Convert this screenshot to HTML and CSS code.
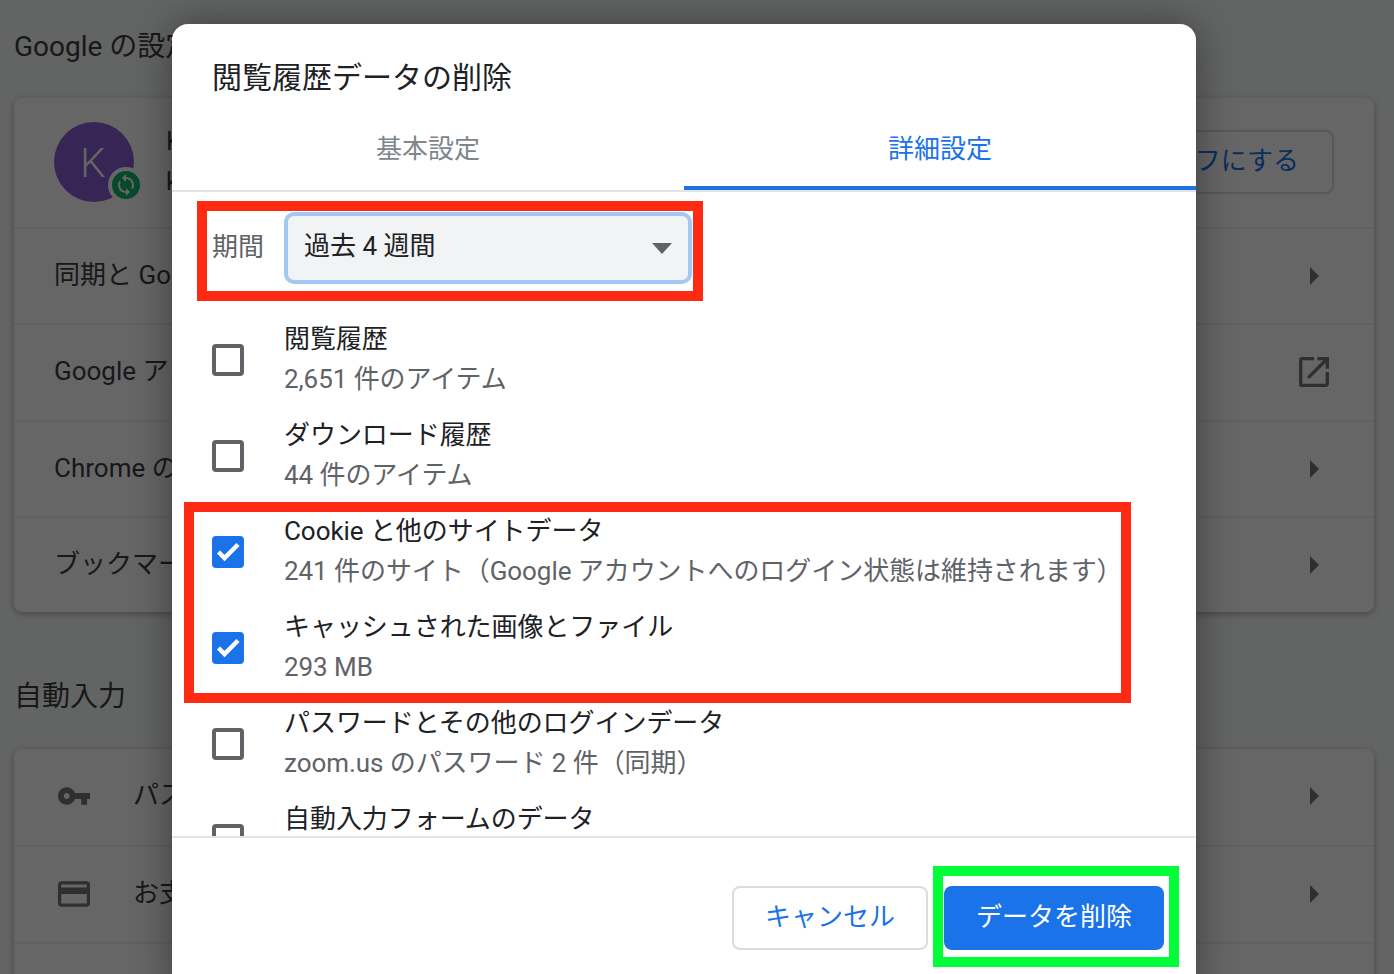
FILE: index.html
```html
<!DOCTYPE html>
<html lang="ja">
<head>
<meta charset="UTF-8">
<meta name="viewport" content="width=device-width, initial-scale=1.0">
<title>閲覧履歴データの削除</title>
<link rel="stylesheet" href="styles.css">
</head>
<body>
<main class="settings">
    <h2 class="section-title first">Google の設定</h2>
    <section class="card">
        <div class="profile">
            <div class="avatar">K
                <span class="sync-badge">
                    <svg viewBox="0 0 24 24" width="24" height="24"><path d="M12 4V1L8 5l4 4V6c3.31 0 6 2.69 6 6 0 1.01-.25 1.97-.7 2.8l1.46 1.46C19.54 15.03 20 13.57 20 12c0-4.42-3.58-8-8-8zm0 14c-3.31 0-6-2.69-6-6 0-1.01.25-1.97.7-2.8L5.24 7.74C4.46 8.97 4 10.43 4 12c0 4.42 3.58 8 8 8v3l4-4-4-4v3z"/></svg>
                </span>
            </div>
            <div class="profile-name">
                <div>K</div>
                <div>k</div>
            </div>
            <button class="sync-button">オフにする</button>
        </div>
        <div class="row">同期と Google サービス<span class="row-end"><i class="arrow"></i></span></div>
        <div class="row">Google アカウントの管理
            <span class="row-end">
                <svg viewBox="3 3 18 18" width="30" height="30"><path d="M19 19H5V5h7V3H5a2 2 0 0 0-2 2v14a2 2 0 0 0 2 2h14c1.1 0 2-.9 2-2v-7h-2v7zM14 3v2h3.59l-9.83 9.83 1.41 1.41L19 6.41V10h2V3h-7z"/></svg>
            </span>
        </div>
        <div class="row">Chrome の名前と画像<span class="row-end"><i class="arrow"></i></span></div>
        <div class="row">ブックマークと設定をインポート<span class="row-end"><i class="arrow"></i></span></div>
    </section>

    <h2 class="section-title second">自動入力</h2>
    <section class="card">
        <div class="row no-line">
            <svg class="row-icon" viewBox="1 1 22 22" width="32" height="32"><path d="M12.65 10C11.83 7.67 9.61 6 7 6c-3.31 0-6 2.69-6 6s2.69 6 6 6c2.61 0 4.83-1.67 5.65-4H17v4h4v-4h2v-4H12.65zM7 14c-1.1 0-2-.9-2-2s.9-2 2-2 2 .9 2 2-.9 2-2 2z"/></svg>
            パスワード<span class="row-end"><i class="arrow"></i></span>
        </div>
        <div class="row">
            <svg class="row-icon" viewBox="2 2 20 20" width="32" height="32"><path d="M20 4H4c-1.11 0-1.99.89-1.99 2L2 18c0 1.11.89 2 2 2h16c1.11 0 2-.89 2-2V6c0-1.11-.89-2-2-2zm0 14H4v-6h16v6zm0-10H4V6h16v2z"/></svg>
            お支払い方法<span class="row-end"><i class="arrow"></i></span>
        </div>
        <div class="row"></div>
    </section>
</main>

<div class="overlay">
    <div class="dialog">
        <h1 class="dialog-title">閲覧履歴データの削除</h1>
        <div class="tabs">
            <div class="tab">基本設定</div>
            <div class="tab active">詳細設定</div>
        </div>
        <div class="dialog-body">
            <div class="range">
                <span class="range-label">期間</span>
                <div class="range-select">過去 4 週間<i class="caret"></i></div>
            </div>
            <div class="check-row">
                <span class="checkbox"></span>
                <div class="check-text">
                    <div>閲覧履歴</div>
                    <div class="sub">2,651 件のアイテム</div>
                </div>
            </div>
            <div class="check-row">
                <span class="checkbox"></span>
                <div class="check-text">
                    <div>ダウンロード履歴</div>
                    <div class="sub">44 件のアイテム</div>
                </div>
            </div>
            <div class="check-row">
                <span class="checkbox checked">
                    <svg viewBox="0 0 32 32" width="32" height="32"><path d="M6.5 16l6 6L26 8.5" fill="none" stroke="#fff" stroke-width="4.5"/></svg>
                </span>
                <div class="check-text">
                    <div>Cookie と他のサイトデータ</div>
                    <div class="sub">241 件のサイト（Google アカウントへのログイン状態は維持されます）</div>
                </div>
            </div>
            <div class="check-row">
                <span class="checkbox checked">
                    <svg viewBox="0 0 32 32" width="32" height="32"><path d="M6.5 16l6 6L26 8.5" fill="none" stroke="#fff" stroke-width="4.5"/></svg>
                </span>
                <div class="check-text">
                    <div>キャッシュされた画像とファイル</div>
                    <div class="sub">293 MB</div>
                </div>
            </div>
            <div class="check-row">
                <span class="checkbox"></span>
                <div class="check-text">
                    <div>パスワードとその他のログインデータ</div>
                    <div class="sub">zoom.us のパスワード 2 件（同期）</div>
                </div>
            </div>
            <div class="check-row">
                <span class="checkbox"></span>
                <div class="check-text">
                    <div>自動入力フォームのデータ</div>
                </div>
            </div>
        </div>
        <div class="dialog-footer">
            <button class="btn cancel">キャンセル</button>
            <button class="btn delete">データを削除</button>
        </div>
    </div>

    <div class="mark mark-range"></div>
    <div class="mark mark-items"></div>
    <div class="mark mark-delete"></div>
</div>
</body>
</html>
```

FILE: styles.css
```css
html, body {
    height: 100%;
}
body {
    margin: 0;
    height: 974px;
    overflow: hidden;
    position: relative;
    background: #f8f9fa;
    color: #3c3d3f;
    font-family: Roboto, "Noto Sans CJK JP", sans-serif;
    font-size: 26px;
    line-height: 40px;
}

/* settings page behind the dialog */
.settings {
    padding: 27px 20px 0 14px;
}
.section-title {
    margin: 0;
    font-size: 28px;
    font-weight: 400;
    line-height: 40px;
}
.section-title.first {
    margin-bottom: 31px;
}
.section-title.second {
    margin: 65px 0 32px;
}
.card {
    background: #fff;
    border-radius: 8px;
    box-shadow: 0 2px 6px rgba(60, 64, 67, 0.4);
}
.profile {
    display: flex;
    align-items: center;
    height: 129px;
    padding: 0 40px 2px;
    box-sizing: border-box;
}
.avatar {
    position: relative;
    flex: 0 0 80px;
    height: 80px;
    border-radius: 50%;
    background: #895fd4;
    color: #fff;
    font-size: 40px;
    font-weight: 300;
    line-height: 84px;
    text-align: center;
    text-indent: -2px;
}
.sync-badge {
    position: absolute;
    right: -10px;
    bottom: -1px;
    width: 36px;
    height: 36px;
    box-sizing: border-box;
    border: 4px solid #fff;
    border-radius: 50%;
    background: #10b96c;
    display: flex;
    align-items: center;
    justify-content: center;
    text-indent: 0;
}
.sync-badge svg {
    fill: #fff;
}
.profile-name {
    flex: 1;
    margin: -2px 0 0 32px;
}
.sync-button {
    width: 200px;
    height: 64px;
    padding-bottom: 2px;
    background: #fff;
    border: 2px solid #dadce0;
    border-radius: 8px;
    color: #1a73e8;
    font: inherit;
}
.row {
    display: flex;
    align-items: center;
    height: 96.25px;
    padding: 0 45px 2px 40px;
    box-sizing: border-box;
    border-top: 2px solid #f0f0f0;
}
.row.no-line {
    border-top: none;
    padding-bottom: 4px;
}
.row-icon {
    margin: 2px 43px 0 4px;
    fill: #747577;
}
.row-end {
    margin: 2px 0 0 auto;
    width: 30px;
    display: flex;
    justify-content: center;
    fill: #747577;
}
.arrow {
    width: 0;
    height: 0;
    border-left: 9px solid #747577;
    border-top: 9px solid transparent;
    border-bottom: 9px solid transparent;
}

/* dialog */
.overlay {
    position: absolute;
    top: 0;
    left: 0;
    width: 100%;
    height: 100%;
    background: rgba(0, 0, 0, 0.6);
}
.dialog {
    position: absolute;
    top: 24px;
    left: 172px;
    width: 1024px;
    display: flex;
    flex-direction: column;
    background: #fff;
    border-radius: 16px;
    box-shadow: 0 0 40px rgba(0, 0, 0, 0.4);
    color: #202124;
}
.dialog-title {
    margin: 0;
    padding: 34px 40px 0;
    font-size: 30px;
    font-weight: 400;
    line-height: 39px;
}
.tabs {
    display: flex;
    border-bottom: 2px solid #e3e4e6;
}
.tab {
    flex: 1;
    padding: 32px 0 17px;
    border-bottom: 4px solid transparent;
    color: #80868b;
    text-align: center;
}
.tab.active {
    border-bottom-color: #1a73e8;
    color: #1a73e8;
}
.dialog-body {
    height: 644px;
    box-sizing: border-box;
    padding-top: 20px;
    overflow: hidden;
}
.range {
    display: flex;
    align-items: center;
    padding-left: 40px;
    margin-bottom: 27px;
}
.range-label {
    width: 72px;
    color: #5f6368;
    margin-top: -3px;
}
.range-select {
    position: relative;
    width: 408px;
    height: 72px;
    box-sizing: border-box;
    padding-left: 16px;
    background: #f1f3f4;
    border: 4px solid #a1c9f4;
    border-radius: 10px;
    line-height: 61px;
}
.caret {
    position: absolute;
    top: 27px;
    right: 16px;
    width: 0;
    height: 0;
    border-top: 11px solid #5f6368;
    border-left: 10px solid transparent;
    border-right: 10px solid transparent;
}
.check-row {
    display: flex;
    align-items: center;
    gap: 40px;
    height: 96px;
    padding-left: 40px;
}
.checkbox {
    flex: 0 0 32px;
    height: 32px;
    box-sizing: border-box;
    margin-top: 2px;
    border: 4px solid #5f6368;
    border-radius: 4px;
}
.checkbox.checked {
    border: none;
    background: #1a73e8;
}
.checkbox svg {
    display: block;
}
.check-text {
    letter-spacing: -0.06px;
}
.check-row:last-child {
    align-items: flex-start;
}
.check-row:last-child .checkbox {
    margin-top: 33px;
}
.check-row:last-child .check-text {
    margin-top: 8px;
}
.sub {
    color: #5f6368;
}
.dialog-footer {
    display: flex;
    justify-content: flex-end;
    gap: 16px;
    padding: 48px 32px;
    border-top: 2px solid #e3e4e6;
}
.btn {
    height: 64px;
    box-sizing: border-box;
    padding-bottom: 4px;
    border-radius: 8px;
    font: inherit;
}
.btn.cancel {
    width: 196px;
    background: #fff;
    border: 2px solid #dadce0;
    color: #1a73e8;
}
.btn.delete {
    width: 220px;
    background: #1a73e8;
    border: none;
    color: #fff;
}

/* highlight frames drawn over the screenshot */
.mark {
    position: absolute;
    box-sizing: border-box;
    border: 10px solid #ff2a12;
}
.mark-range {
    top: 201px;
    left: 197px;
    width: 506px;
    height: 100px;
}
.mark-items {
    top: 502px;
    left: 184px;
    width: 947px;
    height: 201px;
}
.mark-delete {
    top: 866px;
    left: 933px;
    width: 246px;
    height: 101px;
    border-color: #00ff38;
}
```
